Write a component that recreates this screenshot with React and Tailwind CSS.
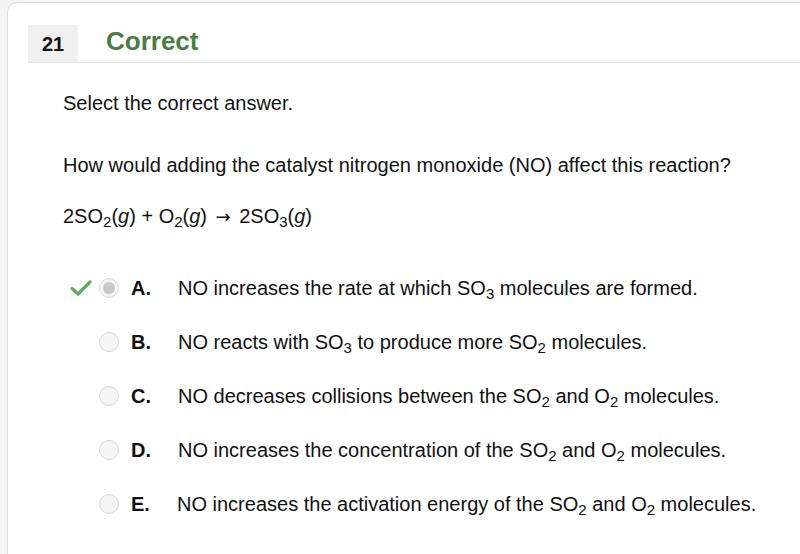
import React from 'react';

const options = [
  { letter: 'A.', text: <>NO increases the rate at which SO<sub>3</sub> molecules are formed.</>, correct: true },
  { letter: 'B.', text: <>NO reacts with SO<sub>3</sub> to produce more SO<sub>2</sub> molecules.</> },
  { letter: 'C.', text: <>NO decreases collisions between the SO<sub>2</sub> and O<sub>2</sub> molecules.</> },
  { letter: 'D.', text: <>NO increases the concentration of the SO<sub>2</sub> and O<sub>2</sub> molecules.</> },
  { letter: 'E.', text: <>NO increases the activation energy of the SO<sub>2</sub> and O<sub>2</sub> molecules.</>, shift: true },
];

const Check = () => (
  <svg width="22" height="16" viewBox="0 0 22 16" className="shrink-0">
    <path d="M2 8.5 L8 14 L20 2" fill="none" stroke="#5cae5c" strokeWidth="3.2" strokeLinecap="round" strokeLinejoin="round" />
  </svg>
);

export default function App() {
  return (
    <div className="w-[800px] h-[554px] overflow-hidden bg-[#f4f4f4] pl-[7px] pt-[2px]" style={{ fontFamily: '"Liberation Sans", Arial, sans-serif' }}>
      <div className="h-full bg-white border-l border-t border-[#dcdcdc] rounded-tl-[10px] pl-[20px] pt-[22px] text-[#111]">
        {/* Header */}
        <div className="flex items-stretch border-b border-[#e2e2e2] h-[38px]">
          <div className="w-[50px] bg-[#f0f0f0] flex items-center justify-center text-[20px] font-bold">21</div>
          <div className="pl-[28px] flex items-center text-[26px] font-bold text-[#4a7c43] -mt-[5px]">Correct</div>
        </div>

        <div className="pl-[35px] text-[20px]">
          <p className="mt-[30px] leading-[20px]">Select the correct answer.</p>
          <p className="mt-[42px] leading-[20px]">How would adding the catalyst nitrogen monoxide (NO) affect this reaction?</p>
          <p className="mt-[31px] leading-[20px]">
            2SO<sub>2</sub>(<i>g</i>) + O<sub>2</sub>(<i>g</i>) <span className="text-[18px] mx-[3px]" style={{ fontFamily: '"DejaVu Sans", sans-serif' }}>→</span> 2SO<sub>3</sub>(<i>g</i>)
          </p>

          <div className="mt-[51px] flex flex-col gap-[34px]">
            {options.map((o) => (
              <div key={o.letter} className="flex items-center h-[20px]">
                <div className="ml-[7px] w-[29px] flex justify-start">{o.correct && <Check />}</div>
                <div className="w-[20px] h-[20px] rounded-full border border-[#d6d6d6] bg-[#f5f5f5] flex items-center justify-center">
                  {o.correct && <div className="w-[12px] h-[12px] rounded-full bg-[#c8c8c8]" />}
                </div>
                <span className="ml-[12px] font-bold w-[47px]">{o.letter}</span>
                <span className={o.shift ? '-ml-[1px]' : ''}>{o.text}</span>
              </div>
            ))}
          </div>
        </div>
      </div>
    </div>
  );
}
